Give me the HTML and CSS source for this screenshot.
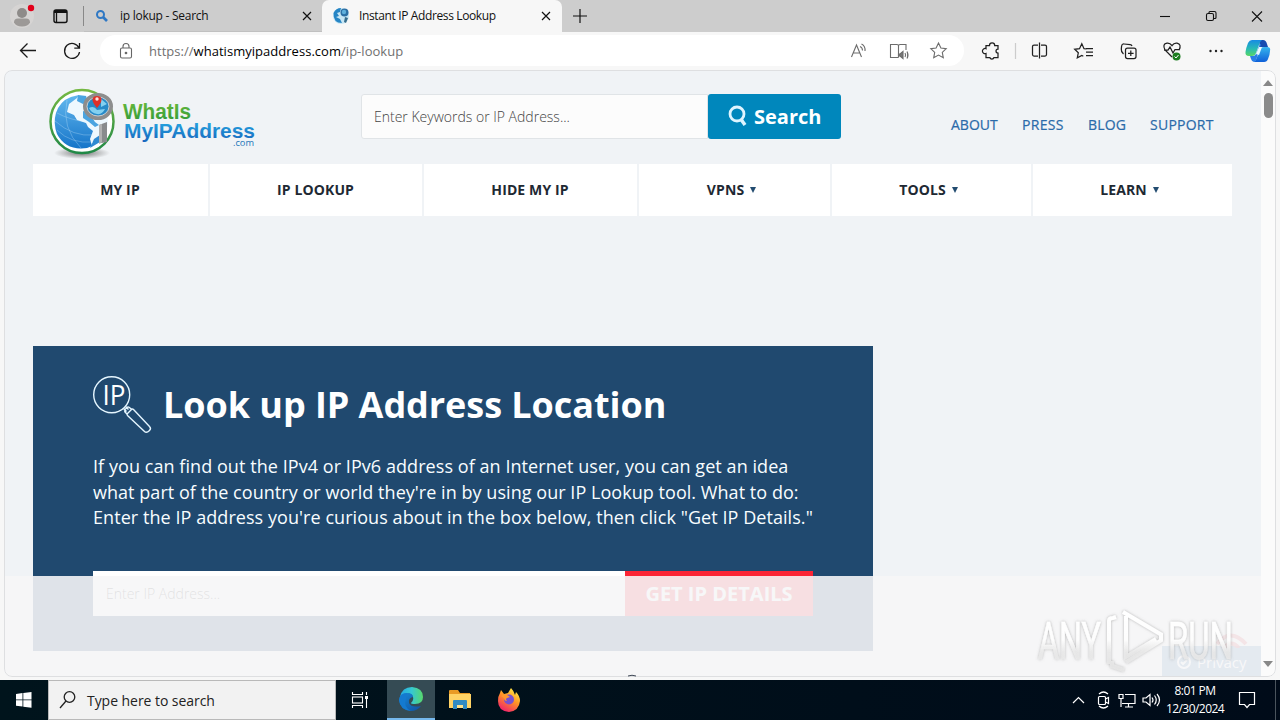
FILE: index.html
```html
<!DOCTYPE html>
<html lang="en">
<head>
<meta charset="utf-8">
<title>Instant IP Address Lookup</title>
<link rel="stylesheet" href="styles.css">
</head>
<body>
<div class="desktop">
  <header class="titlebar">
    <svg class="profile" width="36" height="32" viewBox="0 0 36 32"><circle cx="22" cy="16" r="12" fill="#d6d4d3"/><circle cx="22" cy="13" r="5" fill="#8e8b89"/><path d="M14 22.500q0-4 4-4h8q4 0 4 4-2 4-8 4t-8-4z" fill="#9c9997"/><circle cx="31" cy="8" r="3.200" fill="#e2001a"/></svg>
    <svg class="tab-actions" width="48" height="32" viewBox="0 0 48 32" fill="none" stroke="#111"><rect x="18" y="10" width="13" height="12.500" rx="2" stroke-width="1.400"/><path d="M18 11.500h13" stroke-width="3"/><path d="M20.500 11v11" stroke-width="1.300"/><path d="M47.500 6v20" stroke="#888" stroke-width="1"/></svg>
    <div class="tab tab-idle">
      <svg width="14" height="14" viewBox="0 0 14 14" fill="none" stroke="#2f78c4" stroke-width="2"><circle cx="5.500" cy="5.500" r="3.500"/><path d="M8 8l4 4" stroke-width="2.600"/></svg>
      <span class="tab-label label-search">ip lokup - Search</span>
      <svg class="close" width="10" height="10" viewBox="0 0 10 10" stroke="#111" stroke-width="1.200"><path d="M1 1l8 8M9 1l-8 8"/></svg>
    </div>
    <div class="tab tab-active">
      <svg width="18" height="18" viewBox="0 0 18 18"><circle cx="9" cy="9" r="8" fill="#c7e6f4"/><path d="M1.500 6Q4 1 9 1l-1 4-3 1 2 3-3 1 4 2 2 4Q1 16 1.500 6z" fill="#2685c5"/><circle cx="12.500" cy="5.500" r="4" fill="#2b6fa4"/><circle cx="12" cy="5" r="2.200" fill="#5fb0dc"/><path d="M13 10l3 1-2 5-2-1z" fill="#376d8c"/></svg>
      <span class="tab-label label-active">Instant IP Address Lookup</span>
      <svg class="close" width="10" height="10" viewBox="0 0 10 10" stroke="#111" stroke-width="1.200"><path d="M1 1l8 8M9 1l-8 8"/></svg>
    </div>
    <svg class="plus" width="14" height="14" viewBox="0 0 14 14" stroke="#111" stroke-width="1.200"><path d="M7 0v14M0 7h14"/></svg>
    <svg class="window-controls" width="120" height="32" viewBox="0 0 120 32" fill="none" stroke="#111" stroke-width="1.100"><path d="M4 16.500h10"/><rect x="50.500" y="13.500" width="7" height="7" rx="1.500"/><path d="M53 13v-.5q0-1 1-1h4.500q1.500 0 1.500 1.500v4.500q0 1-1 1h-1"/><path d="M96 11.500l10 10M106 11.500l-10 10"/></svg>
  </header>

  <div class="toolbar">
    <svg class="nav-icons" width="100" height="38" viewBox="0 0 100 38" fill="none" stroke="#1b1b1b" stroke-width="1.300"><path d="M36 18.500H20.500M27.500 11.500l-7 7 7 7"/><path d="M79 16a7.500 7.500 0 1 0 .5 4M79.500 11v5.200h-5.200"/></svg>
    <div class="address">
      <svg width="14" height="18" viewBox="0 0 14 18" fill="none" stroke="#666" stroke-width="1.100"><rect x="1.500" y="6" width="11" height="10" rx="1.500"/><path d="M4 6V4.500a3 3 0 0 1 6 0V6"/><circle cx="7" cy="11" r=".8" fill="#666"/></svg>
      <span class="url">https://<b>whatismyipaddress.com</b>/ip-lookup</span>
      <svg class="address-icons" width="110" height="20" viewBox="0 0 110 20" fill="none" stroke="#6c6c6c" stroke-width="1.100"><path d="M1.500 16L6.500 4l5 12M3.200 12h6.600M10 5.500q2.500 1 2.500 4M11.500 3q4 2 3.500 7"/><path d="M48.500 16.500h-8V3.500h6.500q1.500 0 1.500 1.500 0-1.500 1.500-1.500h6V9M48.500 5v11.500"/><path d="M48.500 13h1.500l3-2.500v7l-3-2.500h-1.500zM55 12q1.200 2 0 4M57 10.500q2 3.500 0 7" fill="#777"/><path d="M88.500 2l2.400 5 5.300.7-3.900 3.700 1 5.400-4.800-2.700-4.800 2.700 1-5.400-3.900-3.700 5.300-.7z"/></svg>
    </div>
    <svg class="tool-icons" width="316" height="38" viewBox="0 0 316 38" fill="none" stroke="#202020" stroke-width="1.250"><path d="M22 13.500h3.500a2.600 2.600 0 0 1 5.200 0H34v3.500a2 2 0 0 0 0 4V25.500h-4a2.200 2.200 0 0 1-4.200 0H22v-4a2.600 2.600 0 1 1 0-4.800z"/><path d="M51.500 11v16" stroke="#ccc"/><path d="M74 13h-4q-1.500 0-1.500 1.500v8q0 1.500 1.500 1.500h4M77 13h4q1.500 0 1.500 1.500v8q0 1.500-1.500 1.500h-4M75.500 10.500v16"/><path d="M122.500 17l-2.500-.3-2.200-5-2.300 5-4.800.6 3.600 3.500-1 5 4.500-2.400 1.500.8M122 16.500h7M122 20h7M122 23.500h7"/><rect x="161.500" y="16" width="10.500" height="10.500" rx="2"/><path d="M166.800 18.500v5.500M164 21.300h5.600M159.500 22q-2.500-2-2.200-5l.3-3q.3-2.200 2.500-2l6 .6q1.500.2 1.900 1.400"/><path d="M208 25l-7-7q-3-6 2-6.800 3-.4 5 2.500 2-3 5-2.500 5 1 2 7M200 18h4l2-3 3 6 2-3.500h4"/><circle cx="212.500" cy="24.500" r="4" fill="#1c7d20" stroke="none"/><path d="M210.500 24.500l1.500 1.500 2.500-3" stroke="#fff" stroke-width="1"/><g fill="#222" stroke="none"><circle cx="246.500" cy="19" r="1.200"/><circle cx="252" cy="19" r="1.200"/><circle cx="257.500" cy="19" r="1.200"/></g></svg>
    <svg class="copilot" width="26" height="26" viewBox="0 0 26 26"><defs><linearGradient id="cpa" x1="0" y1="0" x2="0" y2="1"><stop offset="0" stop-color="#178be4"/><stop offset=".55" stop-color="#28bab5"/><stop offset="1" stop-color="#58d765"/></linearGradient><linearGradient id="cpb" x1="0" y1="0" x2="0" y2="1"><stop offset="0" stop-color="#35b5ee"/><stop offset="1" stop-color="#1060d8"/></linearGradient></defs><path d="M14 2h4q3 0 4 4l1 3h-5q-2 0-3 2z" fill="#164bb0"/><path d="M7 2h10q-2 1-3 5l-3 8q-1 3-4 3H4q-4 0-3.500-4Q1 10 3 5q1.500-3 4-3z" fill="url(#cpa)"/><path d="M19 24H9q2-1 3-5l3-7q1-3 4-3h3q4 0 3 4 0 3-2 8-1 3-4 3z" fill="url(#cpb)"/><path d="M9 24q-2 0-3-3l-1-3h3q2 0 3-2l3-8q1-2 2-2l-4 13q-1 5-3 5z" fill="#2a7fe6"/><path d="M11 16l3-7h3l-3 8z" fill="#e9faff"/></svg>
  </div>

  <main class="page">
    <div class="content">
      <div class="site-header">
        <svg class="logo" width="210" height="76" viewBox="0 0 210 76"><defs><linearGradient id="ring" x2="0" y2="1"><stop stop-color="#75b843"/><stop offset="1" stop-color="#218947"/></linearGradient><linearGradient id="sea" x2="0" y2="1"><stop stop-color="#63b8ee"/><stop offset="1" stop-color="#1675c9"/></linearGradient><radialGradient id="shade"><stop stop-color="#777"/><stop offset="1" stop-color="#777" stop-opacity="0"/></radialGradient><linearGradient id="grn" x2="0" y2="1"><stop stop-color="#6cbb3b"/><stop offset="1" stop-color="#2c983a"/></linearGradient><linearGradient id="blu" x2="0" y2="1"><stop stop-color="#27aee5"/><stop offset="1" stop-color="#1765bd"/></linearGradient></defs><ellipse cx="34" cy="68" rx="28" ry="6" fill="url(#shade)"/><circle cx="34" cy="36.500" r="31.500" fill="#fff" stroke="url(#ring)" stroke-width="2.500"/><circle cx="33" cy="37" r="27" fill="#eef8fe"/><path d="M8 28Q12 16 23 12l8-2-2 3-8 6-2 8 7 3 3 5 9 3 2 4 5 4-3 8 2 7-5 2Q18 66 9 49 5 38 8 28z" fill="url(#sea)"/><path d="M30 10l8 1 2 6-5 2-6-3zM35 26l6 2 6 9 4 3-4 2-6-5-6-4z" fill="#4ba4e0"/><path d="M46 54l9-6-3 9-10 6z" fill="#2f8ad2"/><g fill="none" stroke="#d9efff" stroke-opacity=".4" stroke-width=".7"><path d="M7 36q18 16 39 14M9 45q14 14 36 12M19 15q-6 28 14 48M9 28q13 7 30 9"/></g><ellipse cx="50" cy="21.500" rx="13" ry="11.500" fill="#278ac8" stroke="#8d8d8d" stroke-width="4"/><ellipse cx="50" cy="21.500" rx="11" ry="9.500" fill="none" stroke="#ddd" stroke-width=".8"/><path d="M41 23q5-3 8 2l8-1q-3 6-8 5-6-1-8-6zM53 14l6 5-6 3z" fill="#83d0f0"/><path d="M49 23q-5-6-4.500-9t4.500-3q4 0 4.500 3t-4.500 9z" fill="#df3029"/><circle cx="49" cy="14" r="1.700" fill="#ffe2dc"/><path d="M51 40l8-3v20l-8 1.500z" fill="#898b8d"/><path d="M51 40l3-1v18.500l-3 1z" fill="#b1b1b1"/><g font-family="Liberation Sans, sans-serif" font-weight="bold"><text x="75" y="34" font-size="21.500" textLength="68" lengthAdjust="spacingAndGlyphs" fill="url(#grn)">WhatIs</text><text x="76" y="53" font-size="21" textLength="131" lengthAdjust="spacingAndGlyphs" fill="url(#blu)">MyIPAddress</text></g><text x="185" y="60.500" font-family="Open Sans, sans-serif" font-size="9" textLength="21" lengthAdjust="spacingAndGlyphs" fill="#2375b9">.com</text></svg>
        <form class="search">
          <span class="search-field">Enter Keywords or IP Address...</span>
          <span class="search-button"><svg width="20" height="24" viewBox="0 0 20 24" fill="none" stroke="#dff5ff"><circle cx="9" cy="9" r="7" stroke-width="2.800"/><path d="M13.500 15l3.500 5" stroke-width="3.500"/></svg>Search</span>
        </form>
        <nav class="links"><a class="l1">ABOUT</a><a class="l2">PRESS</a><a class="l3">BLOG</a><a class="l4">SUPPORT</a></nav>
      </div>
      <nav class="menu">
        <a>MY IP</a><a>IP LOOKUP</a><a>HIDE MY IP</a><a class="drop">VPNS <i></i></a><a class="drop">TOOLS <i></i></a><a class="drop">LEARN <i></i></a>
      </nav>
      <section class="hero">
        <div class="hero-title">
          <svg width="60" height="60" viewBox="0 0 60 60" fill="none" stroke="#e5f6ff" stroke-width="1.400"><circle cx="18.700" cy="18.700" r="18"/><path d="M30.500 32.500l3 3M32.500 30.500l3 3M32 36q-1-1.500 0-2.500l2-2q1-1 2.500 0l2 2-4.500 4.500zM34.500 37.500l4-4q1-1 2 0l16 17q2 2 0 4-3 3-5 1l-17-16q-1-1 0-2z"/><text x="9.500" y="28.500" font-family="Open Sans, sans-serif" font-size="27" font-weight="400" stroke="none" fill="#fff" textLength="23" lengthAdjust="spacingAndGlyphs">IP</text></svg>
          <h1>Look up IP Address Location</h1>
        </div>
        <p><span class="p1">If you can find out the IPv4 or IPv6 address of an Internet user, you can get an idea</span><br><span class="p2">what part of the country or world they're in by using our IP Lookup tool. What to do:</span><br><span class="p3">Enter the IP address you're curious about in the box below, then click "Get IP Details."</span></p>
        <div class="lookup"><span class="ip-field">Enter IP Address...</span><span class="lookup-button">GET IP DETAILS</span></div>
      </section>
    </div>
    <div class="scrollbar"><svg width="10" height="6"><path d="M0 6l5-6 5 6z" fill="#888"/></svg><span class="thumb"></span><svg class="down" width="10" height="6"><path d="M0 0l5 6 5-6z" fill="#888"/></svg></div>
    <div class="privacy"><svg width="17" height="16" viewBox="0 0 17 16" fill="none" stroke="#fff" stroke-width="2"><circle cx="8" cy="8" r="6"/><path d="M5 8l2 2 4-4"/></svg>Privacy</div>
    <svg class="signal" width="40" height="20" viewBox="0 0 40 20" fill="none" stroke="#dc3040" stroke-width="4"><path d="M5 16q13-17 29 0M12 20q7-9 15 0"/></svg>
    <div class="veil"></div>
    <div class="rounding"></div>
  </main>
  <svg class="watermark" width="204" height="68" viewBox="0 0 204 68"><defs><linearGradient id="fade" gradientUnits="userSpaceOnUse" x1="0" y1="10" x2="0" y2="60"><stop stop-color="#fff"/><stop offset=".45" stop-color="#fff" stop-opacity=".95"/><stop offset=".7" stop-color="#ececec" stop-opacity=".85"/><stop offset="1" stop-color="#e8e8e8" stop-opacity=".85"/></linearGradient><filter id="soft" x="-10%" y="-10%" width="120%" height="120%"><feDropShadow dx="0" dy="0" stdDeviation="1.800" flood-color="#777" flood-opacity=".55"/></filter></defs><g filter="url(#soft)"><g fill="url(#fade)" stroke="url(#fade)" stroke-width=".6" font-family="Roboto, sans-serif" font-size="52"><text x="4" y="52" textLength="63" lengthAdjust="spacingAndGlyphs">ANY</text><text x="134" y="52" textLength="65" lengthAdjust="spacingAndGlyphs">RUN</text></g><path d="M89 5l38 22.500v6L92 55M92 9v41l30-18M75 57V14q0-3 4-3l3-1M78 54v5l12 4" fill="none" stroke="url(#fade)" stroke-width="4"/></g></svg>
  <svg class="peek" width="12" height="3" viewBox="0 0 12 3"><path d="M2 2q4-1.500 8 0" fill="none" stroke="#3d4654"/></svg>

  <footer class="taskbar">
    <svg class="start" width="48" height="40" viewBox="0 0 48 40" fill="#fff"><path d="M16 14l6.500-.9v6.300H16zM23.300 13l8.200-1v7.400h-8.200zM16 20.300h6.500v6.300l-6.500-.8zM23.300 20.300h8.200v7.400l-8.200-1z"/></svg>
    <div class="task-search"><svg width="18" height="20" viewBox="0 0 18 20" fill="none" stroke="#222" stroke-width="1.300"><circle cx="10.500" cy="7" r="5.300"/><path d="M7 11l-6 7"/></svg><span>Type here to search</span></div>
    <svg class="task-view" width="51" height="40" viewBox="0 0 51 40" fill="none" stroke="#fff" stroke-width="1.100"><path d="M16.500 12v2.500h10v-2.500M16.500 28v-2.500h10v2.500M30.500 12v3M30.500 19v9"/><rect x="16.500" y="17" width="10" height="6"/><path d="M30.500 16v3" stroke-width="3"/></svg>
    <div class="app edge"><svg width="26" height="26" viewBox="0 0 26 26"><defs><linearGradient id="edge-a" x2="1"><stop stop-color="#23a8e3"/><stop offset=".5" stop-color="#36c8d2"/><stop offset="1" stop-color="#58d86b"/></linearGradient><linearGradient id="edge-b" y2="1" x2="1"><stop stop-color="#168bd9"/><stop offset="1" stop-color="#1151a2"/></linearGradient></defs><path d="M2 11Q4 1 14 1q11 1 11 10 0 7-8 7-4 0-4-1 3-3 2-6-3-7-13 0z" fill="url(#edge-a)"/><path d="M1 14Q2 7 9 7q6 0 6 4-5 1-4 6 2 5 12 3-4 5-10 5Q2 24 1 14z" fill="url(#edge-b)"/><path d="M8 13Q5 21 13 25 2 24 1 14q1-7 8-7-1 2-1 6z" fill="#147ad0"/></svg></div>
    <div class="app"><svg width="22" height="20" viewBox="0 0 22 20"><path d="M0 1q0-1 1-1h8l2 3h10v5H0z" fill="#e99b25"/><path d="M0 4h22v14H0z" fill="#ffd365"/><path d="M5 10h12q1 0 1 1v8h-4v-4H8v4H4v-8q0-1 1-1z" fill="#328bc2"/><path d="M8 15h6v3H8z" fill="#ffe28c"/></svg></div>
    <div class="app"><svg width="24" height="24" viewBox="0 0 24 24"><defs><linearGradient id="fox" x1=".8" y1="0" x2=".25" y2="1"><stop stop-color="#fff14a"/><stop offset=".45" stop-color="#ff9625"/><stop offset="1" stop-color="#f01b70"/></linearGradient></defs><path d="M3 5l1-3 3 4 4-1 3-5q3 3 4 7l1-3q4 4 4 9-1 10-11 11Q1 23 1 13q0-5 2-8z" fill="url(#fox)"/><circle cx="12" cy="11.500" r="5" fill="#7751d1"/><path d="M4 8q5-3 9 1l-3 1q-2 1 0 3-3 0-3-3z" fill="#ff982e"/></svg></div>
    <svg class="tray" width="97" height="40" viewBox="0 0 97 40" fill="none" stroke="#fff" stroke-width="1.200"><path d="M7 23l5.500-5.500L18 23M33 14q4.500-4 9 0M33 26q4.500 4 9 0"/><rect x="32.500" y="16.500" width="7" height="8" rx="1"/><path d="M39.500 19l3-1.500v6l-3-1.500M57 17.500v-3h-4v4h4v-1M59 14.500h10v9H56M55 18v9M62.500 23.500v3M59 27h8M77 18h3l4-3.500v11L80 22h-3zM86 17.500q2 2.500 0 5M88.500 15.500q3.500 4.500 0 9M91 14q5 6 0 12"/></svg>
    <div class="clock"><span class="time">8:01 PM</span><span class="date">12/30/2024</span></div>
    <svg class="notice" width="53" height="40" viewBox="0 0 53 40" fill="none" stroke="#fff" stroke-width="1.200"><path d="M12.500 12.500h15v12h-5l-2.500 3-2.500-3h-5z"/><path d="M48.500 0v40" stroke="#4a545d" stroke-width="1"/></svg>
  </footer>
</div>
</body>
</html>
```
FILE: styles.css
```css
* { box-sizing: border-box; }
body { margin: 0; font-family: "Open Sans", "Noto Sans", sans-serif; overflow: hidden; }
svg { display: block; flex-shrink: 0; }
span, a, h1 { white-space: nowrap; }
.desktop { position: relative; width: 1280px; height: 720px; display: flex; flex-direction: column; background: #f7f7f7; overflow: hidden; }
.titlebar { height: 32px; display: flex; background: #cdcdcd; align-items: center; flex-shrink: 0; }
.tab { height: 32px; display: flex; align-items: center; color: #111; font-size: 12px; }
.tab-idle { width: 238px; padding: 0 10px 0 11px; border-bottom: 1px solid #c0c0c0; }
.tab-active { width: 240px; padding: 0 11px 0 10px; background: #f7f7f7; border-radius: 7px 7px 0 0; }
.tab-label { line-height: 16px; }
.label-search { margin-left: 11px; letter-spacing: -.26px; }
.label-active { margin-left: 9px; letter-spacing: -.37px; }
.close { margin-left: auto; }
.plus { margin-left: 11px; }
.window-controls { margin-left: auto; margin-right: 4px; }

.toolbar { height: 38px; display: flex; align-items: flex-start; flex-shrink: 0; }
.address { width: 864px; height: 31px; margin-top: 3px; padding: 0 4px 0 19px; display: flex; align-items: center; background: #fff; border-radius: 16px; }
.url { margin-left: 16px; font-size: 13px; letter-spacing: .03px; color: #707070; }
.url b { font-weight: 400; color: #000; }
.address-icons { margin-left: auto; }
.copilot { margin: 6px 0 0 -35px; }

.page { position: relative; width: 1272px; height: 607px; margin-left: 4px; display: flex; background: #f0f3f6; border-radius: 8px; overflow: hidden; flex-shrink: 0; }
.content { width: 1257px; padding-left: 29px; }
.site-header { height: 94px; display: flex; }
.logo { margin: 15px 0 0 15px; }
.search { display: flex; width: 480px; height: 45px; margin: 24px 0 0 103px; }
.search-field { width: 347px; height: 45px; padding-left: 12px; line-height: 43px; border: 1px solid #e0e4e7; background: #fcfcfc; font-size: 14px; font-weight: 300; color: #444; border-radius: 3px 0 0 3px; }
.search-button { width: 133px; height: 45px; padding-left: 20px; display: flex; align-items: center; gap: 6px; background: #0087bc; border-radius: 3px; color: #fff; font-size: 20px; font-weight: 700; }
.links { display: flex; gap: 24px; margin: 45px 0 0 110px; font-size: 14px; line-height: 20px; color: #2a6aa9; -webkit-text-stroke: .2px #2a6aa9; }
.l1 { width: 47px; }
.l2 { width: 42px; letter-spacing: .3px; }
.l3 { width: 38px; letter-spacing: .15px; }
.l4 { letter-spacing: .25px; }
.menu { width: 1199px; height: 52px; display: grid; grid-template-columns: 175px 212px 213px 191px 199px 199px; gap: 2px; }
.menu a { display: flex; align-items: center; justify-content: center; padding: 0 1px 2px 0; background: #fff; color: #1e2933; font-size: 14px; font-weight: 700; letter-spacing: .12px; }
.menu .drop { padding-right: 6px; }
.menu i { width: 0; height: 0; margin-left: 6px; margin-top: 1px; border: 3px solid transparent; border-top: 6px solid #234c70; border-bottom: 0; }
.hero { width: 840px; height: 305px; margin-top: 130px; padding: 30px 60px; background: #20496f; color: #fff; }
.hero-title { height: 60px; display: flex; gap: 10px; }
.hero h1 { margin: 0; font-size: 36px; line-height: 58px; font-weight: 700; letter-spacing: -.06px; }
.hero p { margin: 18px 0 0; font-size: 18px; line-height: 25.500px; color: #f8fdff; }
.p1, .p3 { letter-spacing: .062px; }
.p2 { letter-spacing: .045px; }
.lookup { height: 45px; margin-top: 40.500px; display: flex; }
.ip-field { width: 532px; padding-left: 13px; line-height: 45px; background: #fff; color: #333; font-size: 14px; font-weight: 300; }
.lookup-button { width: 188px; background: #fc2435; font-size: 20px; line-height: 46px; font-weight: 700; text-align: center; }
.scrollbar { width: 15px; padding: 10px 0 6px 2px; display: flex; flex-direction: column; background: #fbfbfb; }
.thumb { width: 9px; height: 25px; margin: 7px 0 0 1px; border-radius: 5px; background: #8b8b8b; }
.down { margin-top: auto; margin-bottom: 4px; }
.privacy { position: absolute; left: 1158px; top: 576px; width: 99px; height: 31px; display: flex; align-items: center; gap: 4px; padding-left: 14px; background: #4a80b5; color: #fff; font-size: 15px; }
.signal { position: absolute; left: 1208px; top: 558px; opacity: .8; }
.veil { position: absolute; left: 0; top: 506px; width: 1257px; height: 101px; background: rgba(246,246,247,.895); }
.rounding { position: absolute; inset: 0; border: 1px solid #dedfe1; border-radius: 8px; }
.watermark { position: absolute; left: 1034px; top: 607px; }
.peek { position: absolute; left: 626px; top: 674px; }

.taskbar { height: 40px; margin-top: 3px; display: flex; align-items: center; background: #00121b linear-gradient(90deg, #00141c, #000b19); color: #fff; flex-shrink: 0; }
.task-search { width: 288px; height: 40px; padding-left: 10px; display: flex; align-items: center; gap: 10px; background: #f2f2f2; border: 1px solid #b9b9b9; color: #222; font-size: 14px; letter-spacing: -.05px; }
.app { width: 48px; height: 40px; display: flex; align-items: center; justify-content: center; padding-left: 2px; margin-right: 1px; }
.edge { background: #354b54; border-bottom: 2px solid #76b9ed; margin-right: 0; padding-left: 0; }
.tray { margin-left: auto; }
.clock { width: 64px; display: flex; flex-direction: column; align-items: center; font-size: 12px; line-height: 18px; margin-bottom: 1px; letter-spacing: -.55px; }
```
